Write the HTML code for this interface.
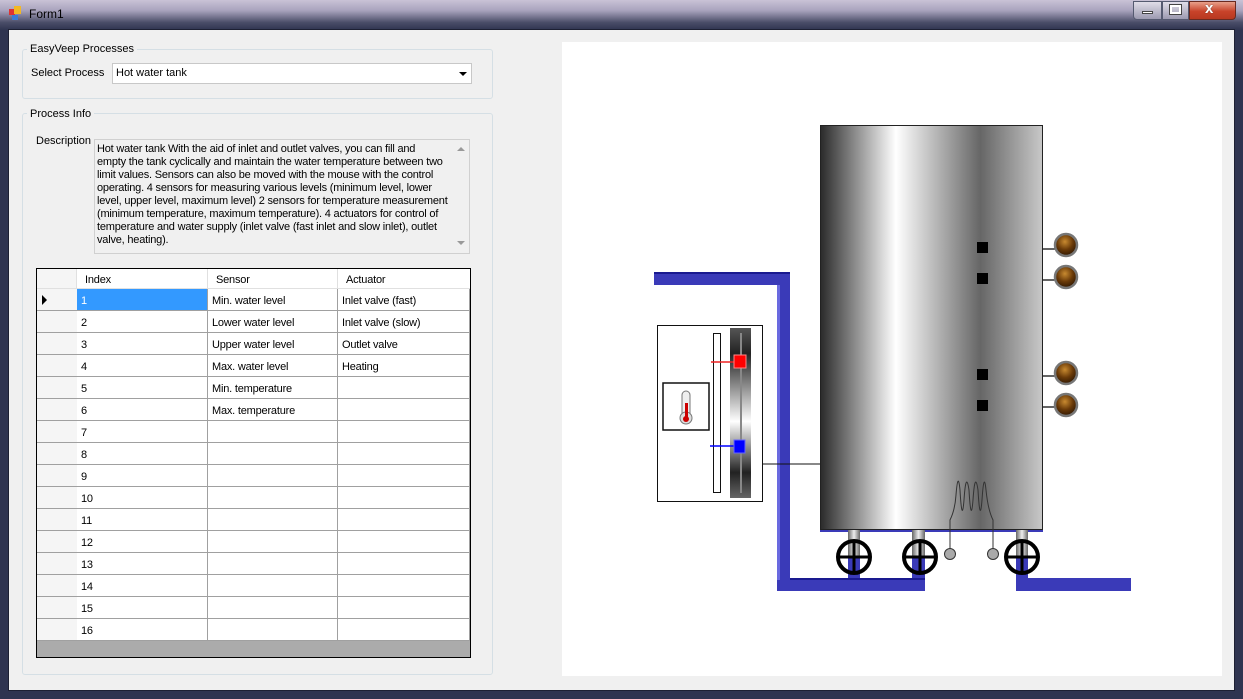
<!DOCTYPE html>
<html><head><meta charset="utf-8"><style>
*{margin:0;padding:0;box-sizing:border-box}
body{width:1243px;height:699px;overflow:hidden;background:#2f3450;font-family:"Liberation Sans",sans-serif;font-size:11px;color:#000;position:relative}
.abs{position:absolute}
#title{left:0;top:0;width:1243px;height:30px;background:linear-gradient(#c9c2d6 0,#a9a3bd 35%,#4a4d68 75%,#2f3450 100%)}
#client{left:8px;top:29px;width:1227px;height:662px;background:#f0f0f0;border:1px solid #1d2033}
.grp{border:1px solid #d5dfe5;border-radius:3px}
.lbl{background:#f0f0f0;padding:0 3px;font-size:11px}
.row{position:absolute;left:0;width:433px;height:22px;border-bottom:1px solid #a0a0a0}
.c{position:absolute;top:0;height:21px;line-height:25px;padding-left:4px;white-space:nowrap;letter-spacing:-0.2px;background:#fff;border-right:1px solid #a0a0a0}
.rh{position:absolute;left:0;top:0;width:40px;height:21px;background:#f5f5f5}
</style></head><body>
<div id="title" class="abs"></div>
<div class="abs" style="left:9px;top:9px;width:6px;height:6px;background:#d33"></div>
<div class="abs" style="left:14px;top:6px;width:7px;height:8px;background:#f2b824"></div>
<div class="abs" style="left:12px;top:15px;width:6px;height:5px;background:#3a7bd5"></div>
<div class="abs" style="left:29px;top:7px;font-size:12px;color:#000">Form1</div>
<div class="abs" style="left:1133px;top:1px;width:29px;height:19px;border:1px solid #555a70;border-radius:0 0 0 4px;background:linear-gradient(#e0dde8,#9c9ab0)"></div>
<div class="abs" style="left:1142px;top:11px;width:11px;height:3px;background:#fff;border:1px solid #444"></div>
<div class="abs" style="left:1162px;top:1px;width:27px;height:19px;border:1px solid #555a70;background:linear-gradient(#e0dde8,#9c9ab0)"></div>
<div class="abs" style="left:1170px;top:5px;width:11px;height:9px;border:2px solid #fff;outline:1px solid #444"></div>
<div class="abs" style="left:1189px;top:1px;width:47px;height:19px;border:1px solid #6a2a20;border-radius:0 0 4px 0;background:linear-gradient(#e8a08a,#c8432a 55%,#b83820)"></div>
<div class="abs" style="left:1205px;top:0px;color:#fff;font-weight:bold;font-size:15px;text-shadow:0 0 1px #333">x</div>

<div id="client" class="abs"></div>

<div class="abs grp" style="left:22px;top:49px;width:471px;height:50px"></div>
<div class="abs lbl" style="left:27px;top:43px">EasyVeep Processes</div>
<div class="abs" style="left:31px;top:67px">Select Process</div>
<div class="abs" style="left:112px;top:63px;width:360px;height:21px;background:#fff;border:1px solid #c8c8c8"></div>
<div class="abs" style="left:116px;top:67px">Hot water tank</div>
<div class="abs" style="left:459px;top:72px;width:0;height:0;border-left:4px solid transparent;border-right:4px solid transparent;border-top:4px solid #000"></div>

<div class="abs grp" style="left:22px;top:113px;width:471px;height:562px"></div>
<div class="abs lbl" style="left:27px;top:108px">Process Info</div>
<div class="abs" style="left:36px;top:135px">Description</div>
<div class="abs" style="left:94px;top:139px;width:376px;height:115px;border:1px solid #d0d0d0;background:#f0f0f0"></div>
<div class="abs" style="left:97px;top:143px;line-height:13px;font-size:11px;letter-spacing:-0.2px;white-space:nowrap">Hot water tank With the aid of inlet and outlet valves, you can fill and<br>empty the tank cyclically and maintain the water temperature between two<br>limit values. Sensors can also be moved with the mouse with the control<br>operating. 4 sensors for measuring various levels (minimum level, lower<br>level, upper level, maximum level) 2 sensors for temperature measurement<br>(minimum temperature, maximum temperature). 4 actuators for control of<br>temperature and water supply (inlet valve (fast inlet and slow inlet), outlet<br>valve, heating).</div>
<div class="abs" style="left:457px;top:147px;border-left:4px solid transparent;border-right:4px solid transparent;border-bottom:4px solid #999"></div>
<div class="abs" style="left:457px;top:241px;border-left:4px solid transparent;border-right:4px solid transparent;border-top:4px solid #999"></div>

<div class="abs" style="left:36px;top:268px;width:435px;height:390px;border:1px solid #000;background:#ababab;overflow:hidden">
<div class="row" style="top:0;height:20px;border-bottom:1px solid #e0e0e0">
 <div class="rh" style="height:19px;border-right:1px solid #e0e0e0"></div>
 <div class="c" style="left:40px;width:131px;height:19px;line-height:22px;padding-left:8px;border-color:#e0e0e0">Index</div>
 <div class="c" style="left:171px;width:130px;height:19px;line-height:22px;padding-left:8px;border-color:#e0e0e0">Sensor</div>
 <div class="c" style="left:301px;width:132px;height:19px;line-height:22px;padding-left:8px;border:0">Actuator</div>
</div>
<div class="row" style="top:20px"><div class="rh"><span style="position:absolute;left:5px;top:6px;border-top:5px solid transparent;border-bottom:5px solid transparent;border-left:5px solid #000"></span></div><div class="c" style="left:40px;width:131px;background:#3399ff;color:#fff">1</div><div class="c" style="left:171px;width:130px">Min. water level</div><div class="c" style="left:301px;width:132px">Inlet valve (fast)</div></div>
<div class="row" style="top:42px"><div class="rh"></div><div class="c" style="left:40px;width:131px">2</div><div class="c" style="left:171px;width:130px">Lower water level</div><div class="c" style="left:301px;width:132px">Inlet valve (slow)</div></div>
<div class="row" style="top:64px"><div class="rh"></div><div class="c" style="left:40px;width:131px">3</div><div class="c" style="left:171px;width:130px">Upper water level</div><div class="c" style="left:301px;width:132px">Outlet valve</div></div>
<div class="row" style="top:86px"><div class="rh"></div><div class="c" style="left:40px;width:131px">4</div><div class="c" style="left:171px;width:130px">Max. water level</div><div class="c" style="left:301px;width:132px">Heating</div></div>
<div class="row" style="top:108px"><div class="rh"></div><div class="c" style="left:40px;width:131px">5</div><div class="c" style="left:171px;width:130px">Min. temperature</div><div class="c" style="left:301px;width:132px"></div></div>
<div class="row" style="top:130px"><div class="rh"></div><div class="c" style="left:40px;width:131px">6</div><div class="c" style="left:171px;width:130px">Max. temperature</div><div class="c" style="left:301px;width:132px"></div></div>
<div class="row" style="top:152px"><div class="rh"></div><div class="c" style="left:40px;width:131px">7</div><div class="c" style="left:171px;width:130px"></div><div class="c" style="left:301px;width:132px"></div></div>
<div class="row" style="top:174px"><div class="rh"></div><div class="c" style="left:40px;width:131px">8</div><div class="c" style="left:171px;width:130px"></div><div class="c" style="left:301px;width:132px"></div></div>
<div class="row" style="top:196px"><div class="rh"></div><div class="c" style="left:40px;width:131px">9</div><div class="c" style="left:171px;width:130px"></div><div class="c" style="left:301px;width:132px"></div></div>
<div class="row" style="top:218px"><div class="rh"></div><div class="c" style="left:40px;width:131px">10</div><div class="c" style="left:171px;width:130px"></div><div class="c" style="left:301px;width:132px"></div></div>
<div class="row" style="top:240px"><div class="rh"></div><div class="c" style="left:40px;width:131px">11</div><div class="c" style="left:171px;width:130px"></div><div class="c" style="left:301px;width:132px"></div></div>
<div class="row" style="top:262px"><div class="rh"></div><div class="c" style="left:40px;width:131px">12</div><div class="c" style="left:171px;width:130px"></div><div class="c" style="left:301px;width:132px"></div></div>
<div class="row" style="top:284px"><div class="rh"></div><div class="c" style="left:40px;width:131px">13</div><div class="c" style="left:171px;width:130px"></div><div class="c" style="left:301px;width:132px"></div></div>
<div class="row" style="top:306px"><div class="rh"></div><div class="c" style="left:40px;width:131px">14</div><div class="c" style="left:171px;width:130px"></div><div class="c" style="left:301px;width:132px"></div></div>
<div class="row" style="top:328px"><div class="rh"></div><div class="c" style="left:40px;width:131px">15</div><div class="c" style="left:171px;width:130px"></div><div class="c" style="left:301px;width:132px"></div></div>
<div class="row" style="top:350px"><div class="rh"></div><div class="c" style="left:40px;width:131px">16</div><div class="c" style="left:171px;width:130px"></div><div class="c" style="left:301px;width:132px"></div></div>
</div>

<svg class="abs" style="left:562px;top:42px" width="660" height="634" viewBox="562 42 660 634">
<defs>
<linearGradient id="tank" x1="0" x2="1"><stop offset="0" stop-color="#2a2a2a"/><stop offset="0.34" stop-color="#fff"/><stop offset="0.72" stop-color="#666"/><stop offset="1" stop-color="#c8c8c8"/></linearGradient>
<linearGradient id="stub" x1="0" x2="1"><stop offset="0" stop-color="#666"/><stop offset="0.5" stop-color="#eee"/><stop offset="1" stop-color="#666"/></linearGradient>
<linearGradient id="slide" x1="0" y1="0" x2="0" y2="1"><stop offset="0" stop-color="#555"/><stop offset="0.15" stop-color="#222"/><stop offset="0.55" stop-color="#fff"/><stop offset="0.85" stop-color="#222"/><stop offset="1" stop-color="#666"/></linearGradient>
<radialGradient id="lamp" cx="0.45" cy="0.35" r="0.6"><stop offset="0" stop-color="#c88a30"/><stop offset="0.6" stop-color="#6a3a08"/><stop offset="1" stop-color="#3a1e04"/></radialGradient>
</defs>
<rect x="562" y="42" width="660" height="634" fill="#fff"/>
<g fill="#3a3ab8">
<rect x="654" y="272" width="136" height="13"/>
<rect x="777" y="272" width="13" height="319"/>
<rect x="777" y="578" width="148" height="13"/>
<rect x="912" y="530" width="13" height="60"/>
<rect x="848" y="530" width="12" height="50"/>
<rect x="1016" y="530" width="12" height="61"/>
<rect x="1016" y="578" width="115" height="13"/>
</g>
<g fill="#6a6ae0"><rect x="777" y="285" width="3" height="295"/><rect x="654" y="272" width="136" height="2" fill="#1a1a90"/><rect x="790" y="578" width="135" height="2" fill="#1a1a90"/></g>
<rect x="820" y="530" width="223" height="2" fill="#3a3ab8"/>
<rect x="848" y="528" width="12" height="30" fill="url(#stub)"/>
<rect x="912" y="528" width="13" height="30" fill="url(#stub)"/>
<rect x="1016" y="528" width="12" height="30" fill="url(#stub)"/>
<rect x="820.5" y="125.5" width="222" height="404" fill="url(#tank)" stroke="#222"/>
<g fill="#000"><rect x="977" y="242" width="11" height="11"/><rect x="977" y="273" width="11" height="11"/><rect x="977" y="369" width="11" height="11"/><rect x="977" y="400" width="11" height="11"/></g>
<g stroke="#111" stroke-width="1.3"><line x1="1043" y1="249" x2="1055" y2="249"/><line x1="1043" y1="280" x2="1055" y2="280"/><line x1="1043" y1="376" x2="1055" y2="376"/><line x1="1043" y1="407" x2="1055" y2="407"/></g>
<g stroke="#777" stroke-width="2.5" fill="url(#lamp)"><circle cx="1066" cy="245" r="11"/><circle cx="1066" cy="277" r="11"/><circle cx="1066" cy="373" r="11"/><circle cx="1066" cy="405" r="11"/></g>
<path d="M950 552 V520 Q955 510 956 495 Q958 470 960 490 Q962 525 964 500 Q966 470 969 490 Q971 525 973 500 Q975 470 978 490 Q980 525 982 500 Q984 470 986 490 Q988 510 993 520 V552" fill="none" stroke="#333" stroke-width="1"/>
<circle cx="950" cy="554" r="5.5" fill="#aaa" stroke="#333"/>
<circle cx="993" cy="554" r="5.5" fill="#aaa" stroke="#333"/>
<g fill="none" stroke="#000" stroke-width="4"><circle cx="854" cy="557" r="16"/><circle cx="920" cy="557" r="16"/><circle cx="1022" cy="557" r="16"/>
<path d="M838 557h32M854 541v32M904 557h32M920 541v32M1006 557h32M1022 541v32" stroke-width="3"/></g>
<line x1="762" y1="464" x2="820" y2="464" stroke="#111"/>
<rect x="657.5" y="325.5" width="105" height="176" fill="#fff" stroke="#111"/>
<rect x="663" y="383" width="46" height="47" fill="#fff" stroke="#111" stroke-width="1.5"/>
<rect x="682" y="391" width="8" height="30" rx="4" fill="#eee" stroke="#777"/>
<circle cx="686" cy="418" r="6" fill="#ddd" stroke="#777"/>
<rect x="685" y="403" width="3" height="16" fill="#c00"/><circle cx="686" cy="419" r="3" fill="#c00"/>
<rect x="713.5" y="333.5" width="7" height="159" fill="#fff" stroke="#111"/>
<rect x="730" y="328" width="21" height="170" fill="url(#slide)"/>
<rect x="740" y="333" width="2" height="160" fill="#888"/>
<line x1="711" y1="362" x2="735" y2="362" stroke="#e22" stroke-width="1.5"/>
<rect x="734" y="355" width="12" height="13" fill="#f00" stroke="#f88"/>
<line x1="710" y1="446" x2="735" y2="446" stroke="#00f" stroke-width="1.5"/>
<rect x="734" y="440" width="11" height="13" fill="#00f" stroke="#66f"/>
</svg>
</body></html>
